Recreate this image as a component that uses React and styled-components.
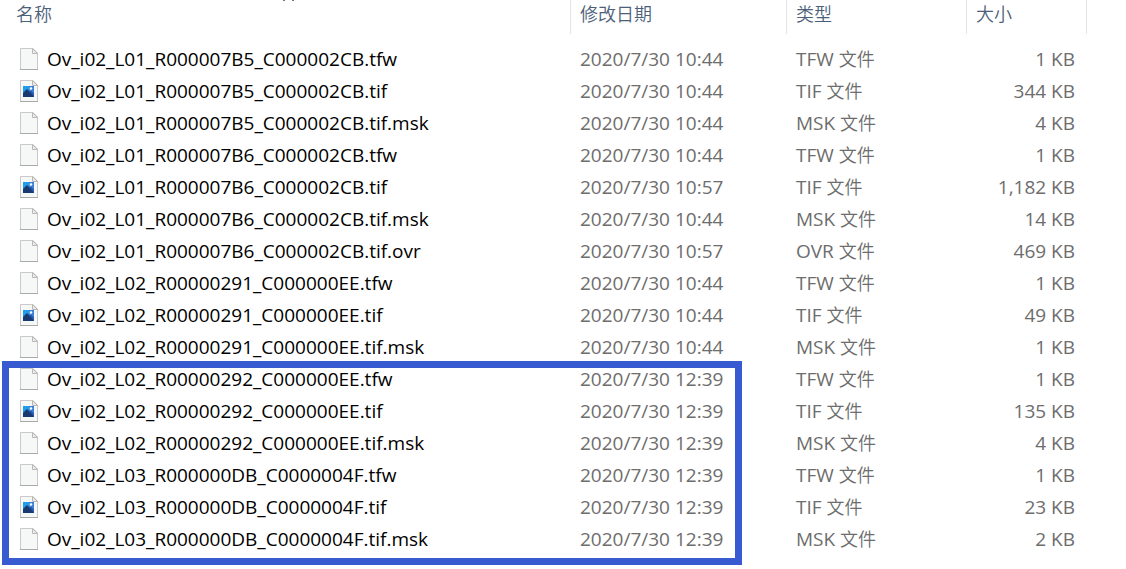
import React from 'react'
import styled, { createGlobalStyle } from 'styled-components'

const GlobalStyle = createGlobalStyle`
  body {
    margin: 0;
    background: #ffffff;
  }
`

const FileTable = styled.table`
  width: 100%;
  table-layout: fixed;
  border-collapse: separate;
  border-spacing: 0;
  font-family: "Open Sans", "Noto Sans CJK SC", sans-serif;
  font-size: 19px;
  line-height: 32px;
  color: #6d6d6d;
  white-space: nowrap;
`

const Column = styled.col`
  width: ${props => props.$width};
`

const HeaderCell = styled.th`
  height: 34px;
  padding: 0;
  text-align: left;
  vertical-align: top;
  border-right: ${props => props.$last ? "0" : "1px solid #e5e5e5"};
`

const HeaderButton = styled.button`
  display: block;
  width: 100%;
  padding: 0 0 0 ${props => props.$first ? "16px" : "9px"};
  border: 0;
  background: none;
  color: #4c607a;
  font-family: "Noto Sans CJK SC", sans-serif;
  font-size: 18px;
  font-weight: 350;
  line-height: 27px;
  text-align: left;
`

// small part of the sort arrow that hangs over the top of the list
const SortMark = styled.svg`
  position: absolute;
  top: 0;
  left: 282px;
`

const Spacer = styled.tbody`
  td {
    height: ${props => props.$height};
    padding: 0;
  }
`

const FileGroup = styled.tbody`
  position: relative;

  &::after {
    content: ${props => props.$framed ? '""' : "none"};
    position: absolute;
    top: -2px;
    bottom: -10px;
    left: 2px;
    right: 384px;
    border: 7px solid #385bd2;
    pointer-events: none;
  }
`

const Cell = styled.td`
  height: 32px;
  padding: 0 12px 0 9px;
  text-align: ${props => props.$align || "left"};
`

const NameCell = styled(Cell)`
  padding-left: 20px;
  color: #000000;
`

const FileName = styled.div`
  display: flex;
  align-items: center;
  gap: 9px;
`

const Kind = styled.span`
  font-family: "Noto Sans CJK SC", sans-serif;
  font-size: 18px;
  font-weight: 350;
  line-height: 20px;
`

function FileIcon(props) {
  return (
    <svg width="18" height="22" viewBox="0 0 18 22" aria-hidden="true">
      <path d="M0.5 0.5H13L17.5 5V21.5H0.5Z" fill="#f6f7f7" stroke="#c9c9c9" />
      <path d="M12.5 0.5V5.5H17.5Z" fill="#e9e9e9" stroke="#b8b8b8" />
      <path d="M0 21.5H18" stroke="#aaaaaa" />
      {props.image && (
        <g>
          <rect x="3" y="6" width="11" height="11" fill="#1e9fe8" />
          <path d="M9 6H14V17H9Z" fill="#3b7fdc" />
          <path d="M3 13L7 9L10 12L11 11L14 14V17H3Z" fill="#173a72" />
          <path d="M10 12L11 11L14 14V17Z" fill="#2b57b0" />
          <circle cx="11" cy="8.5" r="1.3" fill="#ffffff" />
        </g>
      )}
    </svg>
  )
}

const columns = ["名称", "修改日期", "类型", "大小"]

// name, time, size
const files = [
  ["Ov_i02_L01_R000007B5_C000002CB.tfw", "2020/7/30 10:44", "1 KB"],
  ["Ov_i02_L01_R000007B5_C000002CB.tif", "2020/7/30 10:44", "344 KB"],
  ["Ov_i02_L01_R000007B5_C000002CB.tif.msk", "2020/7/30 10:44", "4 KB"],
  ["Ov_i02_L01_R000007B6_C000002CB.tfw", "2020/7/30 10:44", "1 KB"],
  ["Ov_i02_L01_R000007B6_C000002CB.tif", "2020/7/30 10:57", "1,182 KB"],
  ["Ov_i02_L01_R000007B6_C000002CB.tif.msk", "2020/7/30 10:44", "14 KB"],
  ["Ov_i02_L01_R000007B6_C000002CB.tif.ovr", "2020/7/30 10:57", "469 KB"],
  ["Ov_i02_L02_R00000291_C000000EE.tfw", "2020/7/30 10:44", "1 KB"],
  ["Ov_i02_L02_R00000291_C000000EE.tif", "2020/7/30 10:44", "49 KB"],
  ["Ov_i02_L02_R00000291_C000000EE.tif.msk", "2020/7/30 10:44", "1 KB"],
]

const markedFiles = [
  ["Ov_i02_L02_R00000292_C000000EE.tfw", "2020/7/30 12:39", "1 KB"],
  ["Ov_i02_L02_R00000292_C000000EE.tif", "2020/7/30 12:39", "135 KB"],
  ["Ov_i02_L02_R00000292_C000000EE.tif.msk", "2020/7/30 12:39", "4 KB"],
  ["Ov_i02_L03_R000000DB_C0000004F.tfw", "2020/7/30 12:39", "1 KB"],
  ["Ov_i02_L03_R000000DB_C0000004F.tif", "2020/7/30 12:39", "23 KB"],
  ["Ov_i02_L03_R000000DB_C0000004F.tif.msk", "2020/7/30 12:39", "2 KB"],
]

function FileRow(props) {
  const [name, time, size] = props.file
  const extension = name.split(".").pop().toUpperCase()
  return (
    <tr>
      <NameCell>
        <FileName>
          <FileIcon image={extension === "TIF"} />
          <span>{name}</span>
        </FileName>
      </NameCell>
      <Cell>{time}</Cell>
      <Cell>{extension} <Kind>文件</Kind></Cell>
      <Cell $align="right">{size}</Cell>
      <td></td>
    </tr>
  )
}

function App() {
  return (
    <>
      <GlobalStyle />
      <SortMark width="14" height="1" aria-hidden="true">
        <path d="M1 0.5H3M10 0.5H12" stroke="#777777" />
      </SortMark>
      <FileTable>
        <colgroup>
          <Column $width="auto" />
          <Column $width="216px" />
          <Column $width="180px" />
          <Column $width="120px" />
          <Column $width="39px" />
        </colgroup>
        <thead>
          <tr>
            {columns.map((title, i) => (
              <HeaderCell key={title} scope="col">
                <HeaderButton type="button" $first={i === 0}>{title}</HeaderButton>
              </HeaderCell>
            ))}
            <HeaderCell $last />
          </tr>
        </thead>
        <Spacer $height="9px">
          <tr><td colSpan="5"></td></tr>
        </Spacer>
        <FileGroup>
          {files.map(file => <FileRow key={file[0]} file={file} />)}
        </FileGroup>
        <FileGroup $framed>
          {markedFiles.map(file => <FileRow key={file[0]} file={file} />)}
        </FileGroup>
        <Spacer $height="14px">
          <tr><td colSpan="5"></td></tr>
        </Spacer>
      </FileTable>
    </>
  )
}

export default App
